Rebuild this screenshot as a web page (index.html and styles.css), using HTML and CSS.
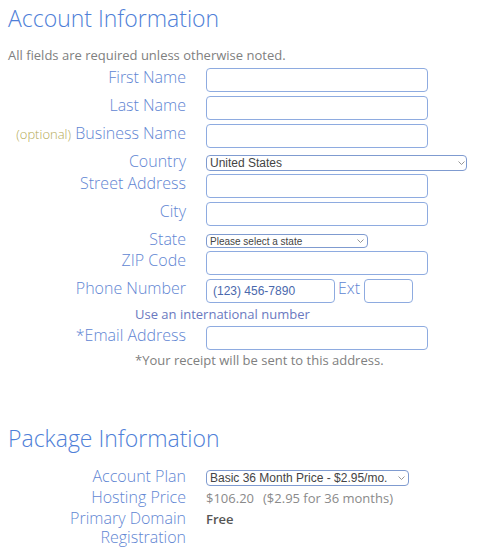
FILE: index.html
```html
<!DOCTYPE html>
<html>
<head>
<meta charset="utf-8">
<link rel="stylesheet" href="styles.css">
</head>
<body>
<h1 class="title">Account Information</h1>
<p class="note">All fields are required unless otherwise noted.</p>
<div class="form">
  <div class="row"><label class="lbl">First Name</label><input class="txt" type="text"></div>
  <div class="row"><label class="lbl">Last Name</label><input class="txt" type="text"></div>
  <div class="row"><label class="lbl"><span class="opt">(optional)</span> Business Name</label><input class="txt" type="text"></div>
  <div class="row row-country"><label class="lbl">Country</label>
    <span class="selwrap sw-country"><select class="sel sel-country"><option>United States</option></select><svg class="chev" width="7" height="4" viewBox="0 0 7 4"><polyline points="0.5,0.5 3.5,3.5 6.5,0.5" fill="none" stroke="#8a8a8a" stroke-width="0.9"/></svg></span></div>
  <div class="row"><label class="lbl">Street Address</label><input class="txt" type="text"></div>
  <div class="row"><label class="lbl">City</label><input class="txt" type="text"></div>
  <div class="row row-state"><label class="lbl">State</label>
    <span class="selwrap sw-state"><select class="sel sel-state"><option>Please select a state</option></select><svg class="chev" width="7" height="4" viewBox="0 0 7 4"><polyline points="0.5,0.5 3.5,3.5 6.5,0.5" fill="none" stroke="#8a8a8a" stroke-width="0.9"/></svg></span></div>
  <div class="row"><label class="lbl">ZIP Code</label><input class="txt" type="text"></div>
  <div class="row"><label class="lbl">Phone Number</label>
    <div class="phone">
      <input class="txt txt-phone" type="text" value="(123) 456-7890">
      <span class="ext-lbl">Ext</span>
      <input class="txt txt-ext" type="text">
    </div>
  </div>
  <p class="hint">Use an international number</p>
  <div class="row"><label class="lbl">*Email Address</label><input class="txt" type="text"></div>
  <p class="receipt">*Your receipt will be sent to this address.</p>
</div>

<h1 class="title title-pkg">Package Information</h1>
<div class="form">
  <div class="row row-info"><label class="lbl">Account Plan</label>
    <span class="selwrap sw-plan"><select class="sel sel-plan"><option>Basic 36 Month Price - $2.95/mo.</option></select><svg class="chev" width="7" height="4" viewBox="0 0 7 4"><polyline points="0.5,0.5 3.5,3.5 6.5,0.5" fill="none" stroke="#8a8a8a" stroke-width="0.9"/></svg></span></div>
  <div class="row row-info row-text"><label class="lbl">Hosting Price</label>
    <div class="val"><span>$106.20</span><span class="val-sub">($2.95 for 36 months)</span></div></div>
  <div class="row row-info row-text"><label class="lbl">Primary Domain Registration</label>
    <div class="val val-free">Free</div></div>
</div>
</body>
</html>
```
FILE: styles.css
```css
html, body {
  background: #fff;
}
body {
  margin: 0;
  padding: 0 8px;
  font-family: "Open Sans", "Liberation Sans", sans-serif;
}
.title {
  margin: 0;
  padding-top: 1px;
  font-size: 23px;
  line-height: 34px;
  font-weight: 300;
  color: #4f7fd8;
}
.note {
  margin: 11px 0 4px;
  font-size: 13px;
  line-height: 18px;
  font-weight: 400;
  color: #808080;
}
.form {
  display: flex;
  flex-direction: column;
}
.row {
  display: flex;
  align-items: flex-start;
  gap: 20px;
  margin-bottom: 4px;
}
.lbl {
  flex: none;
  width: 178px;
  text-align: right;
  font-size: 16px;
  line-height: 19px;
  font-weight: 300;
  color: #5f86d3;
}
.opt {
  font-size: 13px;
  color: #b3a955;
}
.txt {
  box-sizing: border-box;
  width: 222px;
  height: 24px;
  margin: 0;
  padding: 0 6px;
  border: 1px solid #8eabe0;
  border-radius: 4px;
  background: #fff;
  font-family: "Liberation Sans", Arial, sans-serif;
  font-size: 12px;
  color: #4a69ad;
  outline: none;
}
.selwrap {
  position: relative;
  display: block;
  flex: none;
}
.sel {
  display: block;
  box-sizing: border-box;
  margin: 0;
  padding: 0 14px 0 3px;
  border: 1px solid #7f9bd0;
  border-radius: 4px;
  background: #fff;
  font-family: "Liberation Sans", Arial, sans-serif;
  color: #444;
  appearance: none;
  -webkit-appearance: none;
  outline: none;
}
.chev {
  position: absolute;
  top: 50%;
  right: 4px;
  margin-top: -2px;
  pointer-events: none;
}
.row-country { height: 18px; }
.sw-country { margin-top: 3px; }
.sw-country .chev { right: 2px; }
.sel-country {
  width: 261px;
  height: 16px;
  font-size: 12px;
}
.row-state { height: 17px; }
.sw-state { margin-top: 4px; }
.sel-state {
  width: 162px;
  height: 14px;
  font-size: 10px;
}
.phone {
  display: flex;
  align-items: flex-start;
  gap: 4px;
}
.txt-phone { width: 129px; }
.ext-lbl {
  margin-left: -1px;
  font-size: 16px;
  line-height: 19px;
  font-weight: 300;
  color: #5f86d3;
}
.txt-ext { width: 49px; }
.hint {
  margin: -2px 0 2px 127px;
  font-size: 13px;
  line-height: 19px;
  font-weight: 400;
  color: #6a79c0;
}
.receipt {
  margin: -3px 0 0 127px;
  font-size: 13px;
  line-height: 18px;
  font-weight: 400;
  color: #808080;
}
.title-pkg {
  margin-top: 51px;
  margin-bottom: 12px;
}
.row-info {
  margin-bottom: 2px;
}
.sw-plan { margin-top: 3px; }
.sel-plan {
  width: 203px;
  height: 16px;
  font-size: 12px;
}
.row-text { align-items: baseline; }
.val {
  font-size: 13px;
  font-weight: 400;
  color: #8a8a8a;
}
.val-sub { margin-left: 9px; }
.val-free {
  color: #555;
  font-weight: 600;
}
```
